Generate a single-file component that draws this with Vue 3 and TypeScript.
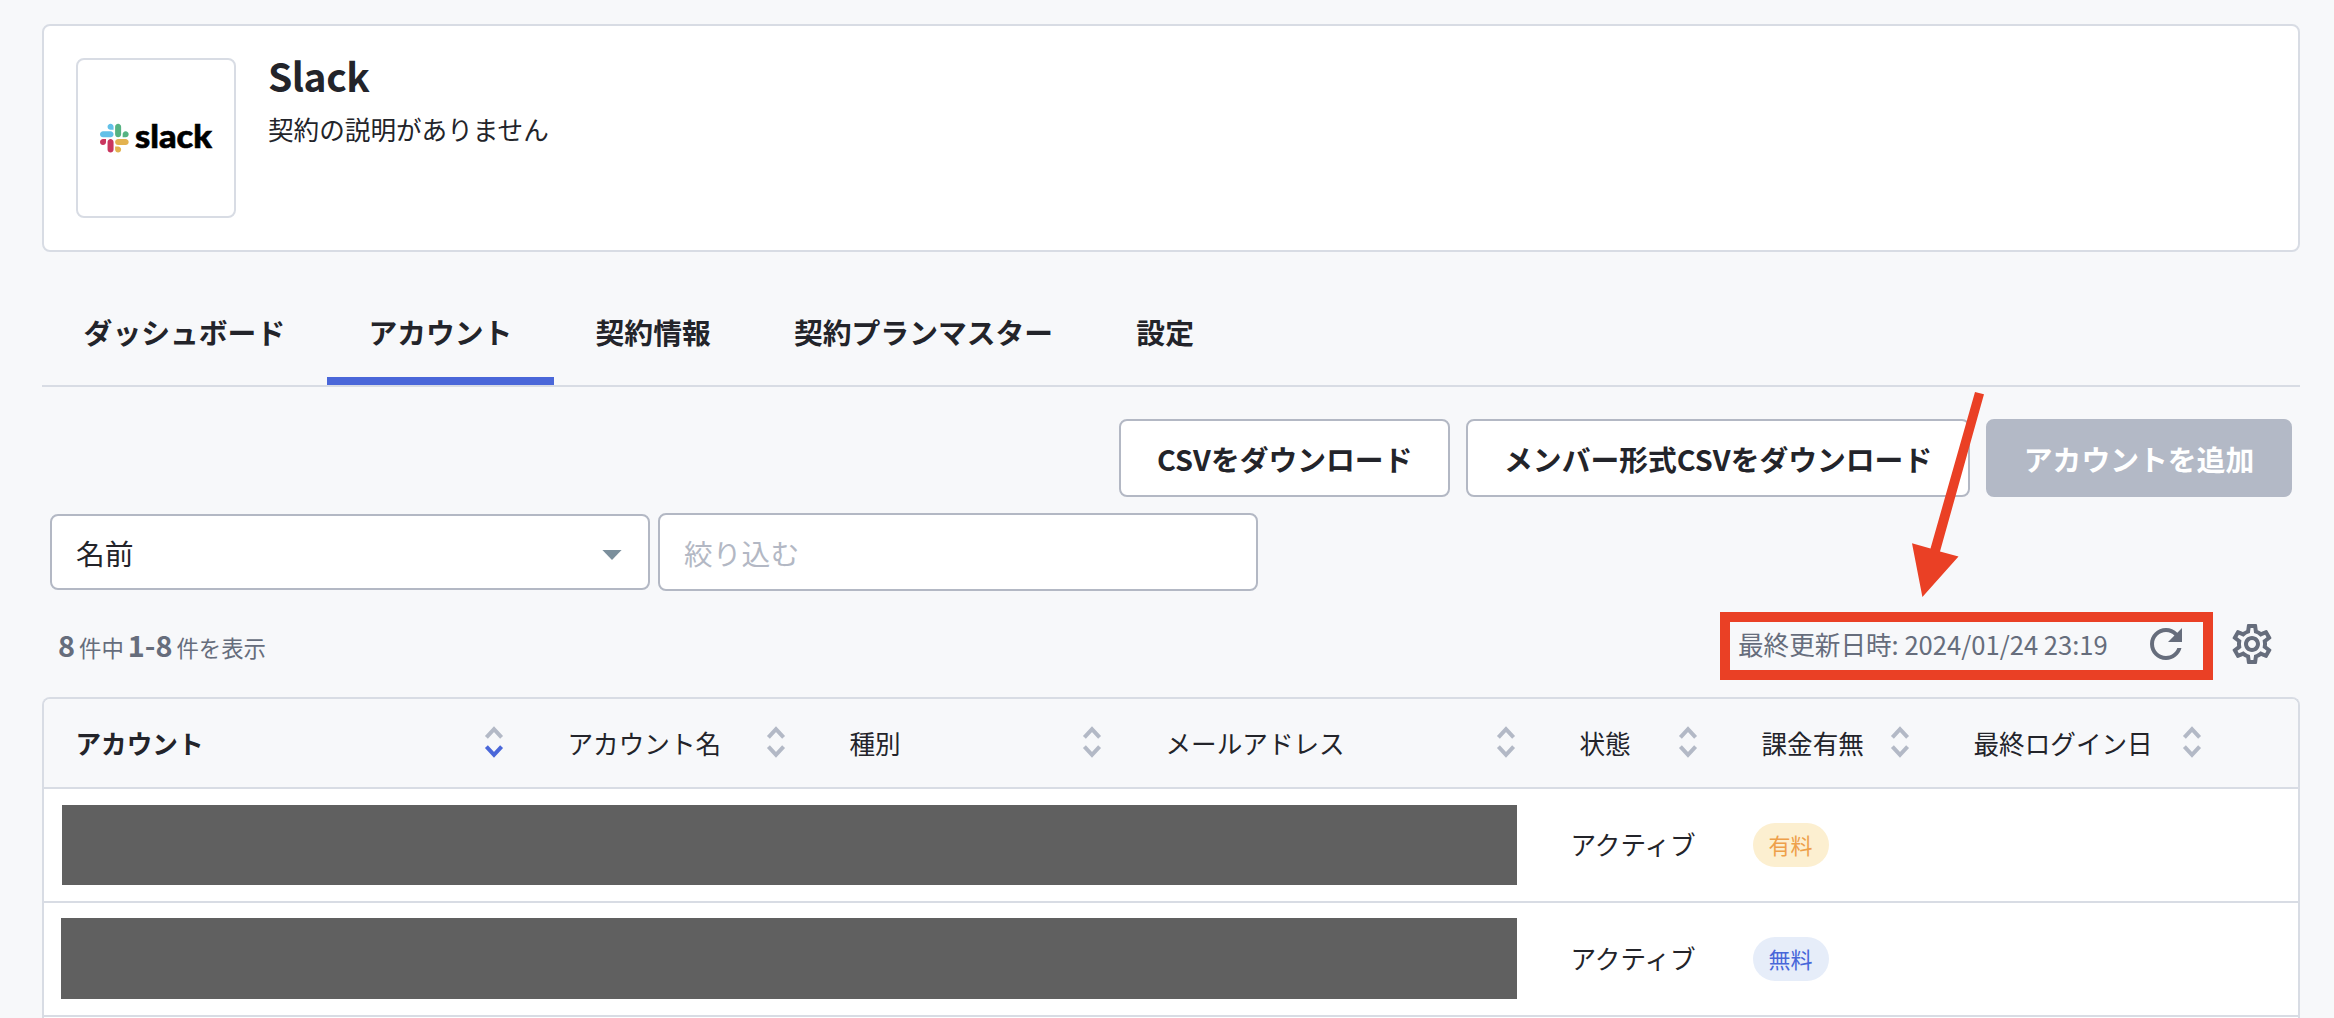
<script setup lang="ts">
interface Column {
  label: string
  sorted?: boolean
}

interface Row {
  id: number
  status: string
  billing: string
  paid: boolean
}

const tabs: string[] = ['ダッシュボード', 'アカウント', '契約情報', '契約プランマスター', '設定']
const activeTab = 'アカウント'

const columns: Column[] = [
  { label: 'アカウント', sorted: true },
  { label: 'アカウント名' },
  { label: '種別' },
  { label: 'メールアドレス' },
  { label: '状態' },
  { label: '課金有無' },
  { label: '最終ログイン日' },
]

const rows: Row[] = [
  { id: 1, status: 'アクティブ', billing: '有料', paid: true },
  { id: 2, status: 'アクティブ', billing: '無料', paid: false },
]
</script>

<template>
  <main class="page">
    <section class="service">
      <div class="service-logo">
        <svg width="156" height="156" viewBox="0 0 156 156">
          <g transform="translate(22 63.8) scale(0.2335)">
            <path fill="#c9365f" d="M25.8 77.6c0 7.1-5.8 12.9-12.9 12.9S0 84.7 0 77.6s5.8-12.9 12.9-12.9h12.9v12.9zm6.5 0c0-7.1 5.8-12.9 12.9-12.9s12.9 5.8 12.9 12.9v32.3c0 7.1-5.8 12.9-12.9 12.9s-12.9-5.8-12.9-12.9V77.6z" />
            <path fill="#62c0e8" d="M45.2 25.8c-7.1 0-12.9-5.8-12.9-12.9S38.1 0 45.2 0s12.9 5.8 12.9 12.9v12.9H45.2zm0 6.5c7.1 0 12.9 5.8 12.9 12.9s-5.8 12.9-12.9 12.9H12.9C5.8 58.1 0 52.3 0 45.2s5.8-12.9 12.9-12.9h32.3z" />
            <path fill="#56b382" d="M97 45.2c0-7.1 5.8-12.9 12.9-12.9s12.9 5.8 12.9 12.9-5.8 12.9-12.9 12.9H97V45.2zm-6.5 0c0 7.1-5.8 12.9-12.9 12.9s-12.9-5.8-12.9-12.9V12.9C64.7 5.8 70.5 0 77.6 0s12.9 5.8 12.9 12.9v32.3z" />
            <path fill="#e3b24f" d="M77.6 97c7.1 0 12.9 5.8 12.9 12.9s-5.8 12.9-12.9 12.9-12.9-5.8-12.9-12.9V97h12.9zm0-6.5c-7.1 0-12.9-5.8-12.9-12.9s5.8-12.9 12.9-12.9h32.3c7.1 0 12.9 5.8 12.9 12.9s-5.8 12.9-12.9 12.9H77.6z" />
          </g>
          <text class="wordmark" x="57" y="87.6" textLength="77" lengthAdjust="spacingAndGlyphs">slack</text>
        </svg>
      </div>
      <div class="service-info">
        <h1>Slack</h1>
        <p>契約の説明がありません</p>
      </div>
    </section>

    <nav class="tabs">
      <a v-for="tab in tabs" :key="tab" class="tab" :class="{ active: tab === activeTab }">{{ tab }}</a>
    </nav>

    <div class="actions">
      <button class="btn">CSVをダウンロード</button>
      <button class="btn">メンバー形式CSVをダウンロード</button>
      <button class="btn disabled">アカウントを追加</button>
    </div>

    <div class="filters">
      <div class="field select">
        <span>名前</span>
        <svg class="caret" width="20" height="10" viewBox="0 0 20 10"><path d="M0.4 0h19.2L10 10z" fill="#7b8f9c" /></svg>
      </div>
      <div class="field input">絞り込む</div>
    </div>

    <div class="summary">
      <div class="count"><b>8</b><span>件中</span><b>1-8</b><span>件を表示</span></div>
      <div class="tools">
        <div class="updated">
          <span>最終更新日時: 2024/01/24 23:19</span>
          <svg class="refresh" viewBox="0 0 24 24"><path d="M17.65 6.35C16.2 4.9 14.21 4 12 4c-4.42 0-7.99 3.58-7.99 8s3.57 8 7.99 8c3.73 0 6.84-2.55 7.73-6h-2.08c-.82 2.33-3.04 4-5.65 4-3.31 0-6-2.69-6-6s2.69-6 6-6c1.66 0 3.14.69 4.22 1.78L13 11h7V4l-2.35 2.35z" /></svg>
        </div>
        <svg class="gear" viewBox="0 0 24 24"><path d="M19.43 12.98c.04-.32.07-.64.07-.98 0-.34-.03-.66-.07-.98l2.11-1.65c.19-.15.24-.42.12-.64l-2-3.46c-.09-.16-.26-.25-.44-.25-.06 0-.12.01-.17.03l-2.49 1c-.52-.4-1.08-.73-1.69-.98l-.38-2.65C14.46 2.18 14.25 2 14 2h-4c-.25 0-.46.18-.49.42l-.38 2.65c-.61.25-1.17.59-1.69.98l-2.49-1c-.06-.02-.12-.03-.18-.03-.17 0-.34.09-.43.25l-2 3.46c-.13.22-.07.49.12.64l2.11 1.65c-.04.32-.07.65-.07.98 0 .33.03.66.07.98l-2.11 1.65c-.19.15-.24.42-.12.64l2 3.46c.09.16.26.25.44.25.06 0 .12-.01.17-.03l2.49-1c.52.4 1.08.73 1.69.98l.38 2.65c.03.24.24.42.49.42h4c.25 0 .46-.18.49-.42l.38-2.65c.61-.25 1.17-.59 1.69-.98l2.49 1c.06.02.12.03.18.03.17 0 .34-.09.43-.25l2-3.46c.12-.22.07-.49-.12-.64l-2.11-1.65zm-1.98-1.71c.04.31.05.52.05.73 0 .21-.02.43-.05.73l-.14 1.13.89.7 1.08.84-.7 1.21-1.27-.51-1.04-.42-.9.68c-.43.32-.84.56-1.25.73l-1.06.43-.16 1.13-.2 1.35h-1.4l-.19-1.35-.16-1.13-1.06-.43c-.43-.18-.83-.41-1.23-.71l-.91-.7-1.06.43-1.27.51-.7-1.21 1.08-.84.89-.7-.14-1.13c-.03-.31-.05-.54-.05-.74s.02-.43.05-.73l.14-1.13-.89-.7-1.08-.84.7-1.21 1.27.51 1.04.42.9-.68c.43-.32.84-.56 1.25-.73l1.06-.43.16-1.13.2-1.35h1.39l.19 1.35.16 1.13 1.06.43c.43.18.83.41 1.23.71l.91.7 1.06-.43 1.27-.51.7 1.21-1.07.85-.89.7.14 1.13zM12 8c-2.21 0-4 1.79-4 4s1.79 4 4 4 4-1.79 4-4-1.79-4-4-4zm0 6c-1.1 0-2-.9-2-2s.9-2 2-2 2 .9 2 2-.9 2-2 2z" /></svg>
      </div>
    </div>

    <section class="table">
      <div class="row head">
        <div v-for="col in columns" :key="col.label" class="th" :class="{ sorted: col.sorted }">
          <span>{{ col.label }}</span>
          <svg class="sort" width="20" height="34" viewBox="0 0 20 34">
            <path class="up" d="M2.4 12.3 10 4.2l7.6 8.1" />
            <path class="down" d="M2.4 21.7 10 29.8l7.6-8.1" />
          </svg>
        </div>
      </div>
      <div v-for="row in rows" :key="row.id" class="row">
        <div class="masked"><div class="mask" :class="{ second: row.id === 2 }"></div></div>
        <div class="td status">{{ row.status }}</div>
        <div class="td"><span class="badge" :class="row.paid ? 'paid' : 'free'">{{ row.billing }}</span></div>
      </div>
      <div class="row"></div>
    </section>

    <svg class="pointer" viewBox="1910 390 76 208">
      <path d="M1975 392l9 2.2L1940 551.5l18.5 5.1-36.1 40.4L1912 543.3l18.5 5.2z" />
    </svg>
  </main>
</template>

<style>
body {
  background: #f7f8fa;
}
</style>

<style scoped>
.page {
  position: relative;
  box-sizing: border-box;
  width: 2334px;
  height: 1018px;
  padding: 24px 34px 0 42px;
  overflow: hidden;
  background: #f7f8fa;
  color: #23242a;
  font-family: "Noto Sans CJK JP", sans-serif;
  font-size: 28.8px;
}

.page * {
  box-sizing: border-box;
}

.service {
  display: flex;
  height: 228px;
  padding: 32px;
  background: #fff;
  border: 2px solid #d8dce4;
  border-radius: 8px;
}

.service-logo {
  width: 160px;
  height: 160px;
  border: 2px solid #d8dce4;
  border-radius: 8px;
}

.service-logo svg {
  display: block;
}

.wordmark {
  font-family: Lato, sans-serif;
  font-weight: 900;
  font-size: 32px;
  fill: #000;
  stroke: #000;
  stroke-width: 0.6;
}

.service-info {
  margin-left: 32px;
}

h1 {
  margin: 0;
  font-size: 39px;
  line-height: 34px;
  font-weight: 700;
  letter-spacing: -0.5px;
}

p {
  margin: 19px 0 0;
  font-size: 25.6px;
  line-height: 35px;
}

.tabs {
  display: flex;
  height: 109px;
  margin-top: 26px;
  border-bottom: 2px solid #d8dce4;
}

.tab {
  padding: 0 41.6px;
  font-weight: 700;
  line-height: 108px;
  white-space: nowrap;
}

.tab.active {
  border-bottom: 8px solid #4a67d9;
}

.actions {
  display: flex;
  justify-content: flex-end;
  gap: 16px;
  padding: 32px 8px 0 0;
}

.btn {
  height: 78px;
  padding: 0 35.8px;
  background: #fff;
  border: 2px solid #b3b8c4;
  border-radius: 8px;
  color: #23242a;
  font: inherit;
  font-weight: 700;
  white-space: nowrap;
}

.btn.disabled {
  background: #b3b9c6;
  border-color: #b3b9c6;
  color: #fff;
}

.filters {
  display: flex;
  align-items: center;
  gap: 8px;
  margin: 16px 0 0 8px;
}

.field {
  display: flex;
  align-items: center;
  width: 600px;
  background: #fff;
  border: 2px solid #b3b8c4;
  border-radius: 8px;
}

.select {
  justify-content: space-between;
  height: 76px;
  padding: 0 26px 0 24px;
}

.caret {
  margin-top: 6px;
}

.input {
  height: 78px;
  padding-left: 24px;
  color: #b3b8c4;
}

.summary {
  display: flex;
  justify-content: space-between;
  align-items: center;
  height: 68px;
  margin-top: 21px;
  color: #666d7c;
}

.count {
  display: flex;
  align-items: baseline;
  gap: 4px;
  padding: 0 0 4px 16px;
  font-size: 22.4px;
  white-space: nowrap;
}

.count b {
  font-size: 28.8px;
}

.tools {
  display: flex;
  align-items: center;
  padding-right: 24px;
}

.updated {
  display: flex;
  align-items: center;
  justify-content: space-between;
  width: 493px;
  height: 68px;
  margin-right: 15px;
  padding: 0 13px 4px 8px;
  border: 10px solid #ea4025;
  font-size: 25.6px;
  line-height: 44px;
  white-space: nowrap;
}

.refresh,
.gear {
  width: 48px;
  height: 48px;
  fill: #666d7c;
}

.refresh {
  margin: -2px 0;
}

.gear {
  margin-bottom: 4px;
}

.table {
  margin-top: 17px;
  background: #fff;
  border: 2px solid #d8dce4;
  border-bottom: 0;
  border-radius: 8px 8px 0 0;
  font-size: 25.6px;
}

.row {
  display: grid;
  grid-template-columns: 492px 282px 316px 414px 182px 212px 292px 1fr;
  height: 114px;
  border-bottom: 2px solid #d8dce4;
}

.head {
  height: 90px;
  background: #f7f8fa;
  border-radius: 6px 6px 0 0;
}

.th {
  display: flex;
  align-items: center;
  justify-content: space-between;
  padding: 0 32px 2px 31.5px;
  white-space: nowrap;
}

.sorted {
  font-weight: 700;
}

.sort path {
  fill: none;
  stroke: #b3b9c6;
  stroke-width: 4;
}

.sorted .sort .down {
  stroke: #4a67d9;
}

.masked {
  grid-column: span 4;
}

.mask {
  width: 1455px;
  height: 80px;
  margin: 16px 0 0 18px;
  background: #606060;
}

.mask.second {
  width: 1456px;
  height: 81px;
  margin: 15px 0 0 17px;
}

.td {
  display: flex;
  align-items: center;
  padding-left: 22.5px;
}

.status {
  padding-bottom: 3px;
}

.badge {
  width: 76px;
  height: 44px;
  border-radius: 22px;
  font-size: 22px;
  line-height: 43px;
  text-align: center;
}

.paid {
  background: #fcefd0;
  color: #eea04a;
}

.free {
  background: #e6edf9;
  color: #4867d9;
}

/* Callout arrow drawn over the toolbar */
.pointer {
  position: absolute;
  left: 1910px;
  top: 390px;
  width: 76px;
  height: 208px;
  fill: #ea4025;
}
</style>
